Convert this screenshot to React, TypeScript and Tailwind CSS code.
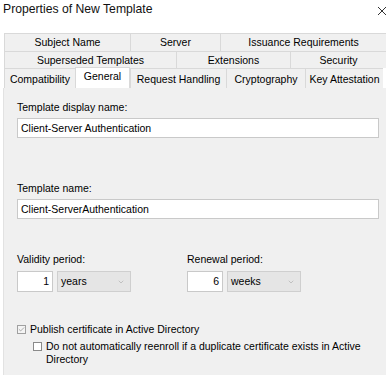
import { Check, ChevronDown } from 'lucide-react'

const row1 = [
  { label: 'Subject Name', w: 'w-[126px]' },
  { label: 'Server', w: 'w-[90px]' },
  { label: 'Issuance Requirements', w: 'w-[166px]' },
]

const row2 = [
  { label: 'Superseded Templates', w: 'w-[172px]' },
  { label: 'Extensions', w: 'w-[114px]' },
  { label: 'Security', w: 'w-[96px]' },
]

const row3 = [
  { label: 'Compatibility', w: 'w-[71px]' },
  { label: 'General', w: 'w-[55px]', active: true },
  { label: 'Request Handling', w: 'w-[96px]' },
  { label: 'Cryptography', w: 'w-[79px]' },
  { label: 'Key Attestation', w: 'w-[78px]' },
]

function Field({ label, value }: { label: string; value: string }) {
  return (
    <div className="flex flex-col gap-[4px]">
      <span className="leading-[13px]">{label}</span>
      <div className="h-[20px] w-[362px] bg-white border border-[#c9c9c9] flex items-center pl-[3px] leading-[13px]">
        {value}
      </div>
    </div>
  )
}

function Period({ label, num, unit }: { label: string; num: string; unit: string }) {
  return (
    <div className="flex flex-col gap-[5px]">
      <span className="leading-[13px]">{label}</span>
      <div className="flex gap-[4px]">
        <div className="h-[21px] w-[36px] bg-white border border-[#c9c9c9] flex items-center justify-end pr-[3px]">
          {num}
        </div>
        <div className="h-[21px] w-[74px] bg-[#e5e5e5] border border-[#cfcfcf] flex items-center justify-between pl-[3px] pr-[5px]">
          <span>{unit}</span>
          <ChevronDown size={8} strokeWidth={1.5} className="text-[#9a9a9a]" />
        </div>
      </div>
    </div>
  )
}

export default function App() {
  return (
    <div className="w-[386px] h-[380px] bg-white overflow-hidden text-black font-['Liberation_Sans',Arial,sans-serif] text-[10.5px]">
      {/* Title bar */}
      <div className="h-[33px] flex justify-between pl-[3px]">
        <span className="text-[12.2px] leading-[15px] pt-[2px] text-[#111]">Properties of New Template</span>
        <svg width="10" height="10" viewBox="0 0 10 10" className="mt-[6px] mr-[-1px]">
          <path d="M1 1 L9 9 M9 1 L1 9" stroke="#333" strokeWidth="1" />
        </svg>
      </div>

      {/* Tabs */}
      <div className="ml-[4px]">
        <div className="flex h-[18px]">
          {row1.map((t) => (
            <div
              key={t.label}
              className={`${t.w} shrink-0 bg-[#f0f0f0] border-t border-l border-[#d9d9d9] flex items-center justify-center leading-[13px]`}
            >
              {t.label}
            </div>
          ))}
        </div>
        <div className="flex h-[17px]">
          {row2.map((t) => (
            <div
              key={t.label}
              className={`${t.w} shrink-0 bg-[#f0f0f0] border-t border-l border-[#d9d9d9] flex items-center justify-center leading-[13px]`}
            >
              {t.label}
            </div>
          ))}
        </div>
        <div className="flex items-end h-[20px]">
          {row3.map((t) =>
            t.active ? (
              <div
                key={t.label}
                className={`${t.w} shrink-0 h-[21px] bg-white border-t border-l border-r border-[#d9d9d9] flex items-start justify-center pt-[2px] leading-[13px] relative z-10`}
              >
                {t.label}
              </div>
            ) : (
              <div
                key={t.label}
                className={`${t.w} shrink-0 h-[20px] bg-[#f0f0f0] border-t border-l border-[#d9d9d9] flex items-center justify-center pt-[1px] leading-[13px]`}
              >
                {t.label}
              </div>
            )
          )}
        </div>
      </div>

      {/* Panel */}
      <div className="ml-[3px] h-[287px] bg-[#f0f0f0] border-l border-[#e2e2e2] pl-[13px] pt-[13px] flex flex-col">
        <Field label="Template display name:" value="Client-Server Authentication" />
        <div className="mt-[44px]">
          <Field label="Template name:" value="Client-ServerAuthentication" />
        </div>
        <div className="mt-[34px] flex gap-[56px]">
          <Period label="Validity period:" num="1" unit="years" />
          <Period label="Renewal period:" num="6" unit="weeks" />
        </div>
        <div className="mt-[31px] flex items-center gap-[4px] leading-[13px]">
          <div className="w-[9px] h-[9px] border border-[#a0a0a0] bg-[#f4f4f4] flex items-center justify-center">
            <Check size={7} strokeWidth={2} className="text-[#777]" />
          </div>
          <span>Publish certificate in Active Directory</span>
        </div>
        <div className="mt-[4px] ml-[16px] flex items-start gap-[4px] leading-[13px] w-[340px]">
          <div className="w-[9px] h-[9px] mt-[2px] shrink-0 border border-[#8a8a8a] bg-white" />
          <span>Do not automatically reenroll if a duplicate certificate exists in Active Directory</span>
        </div>
      </div>
    </div>
  )
}
